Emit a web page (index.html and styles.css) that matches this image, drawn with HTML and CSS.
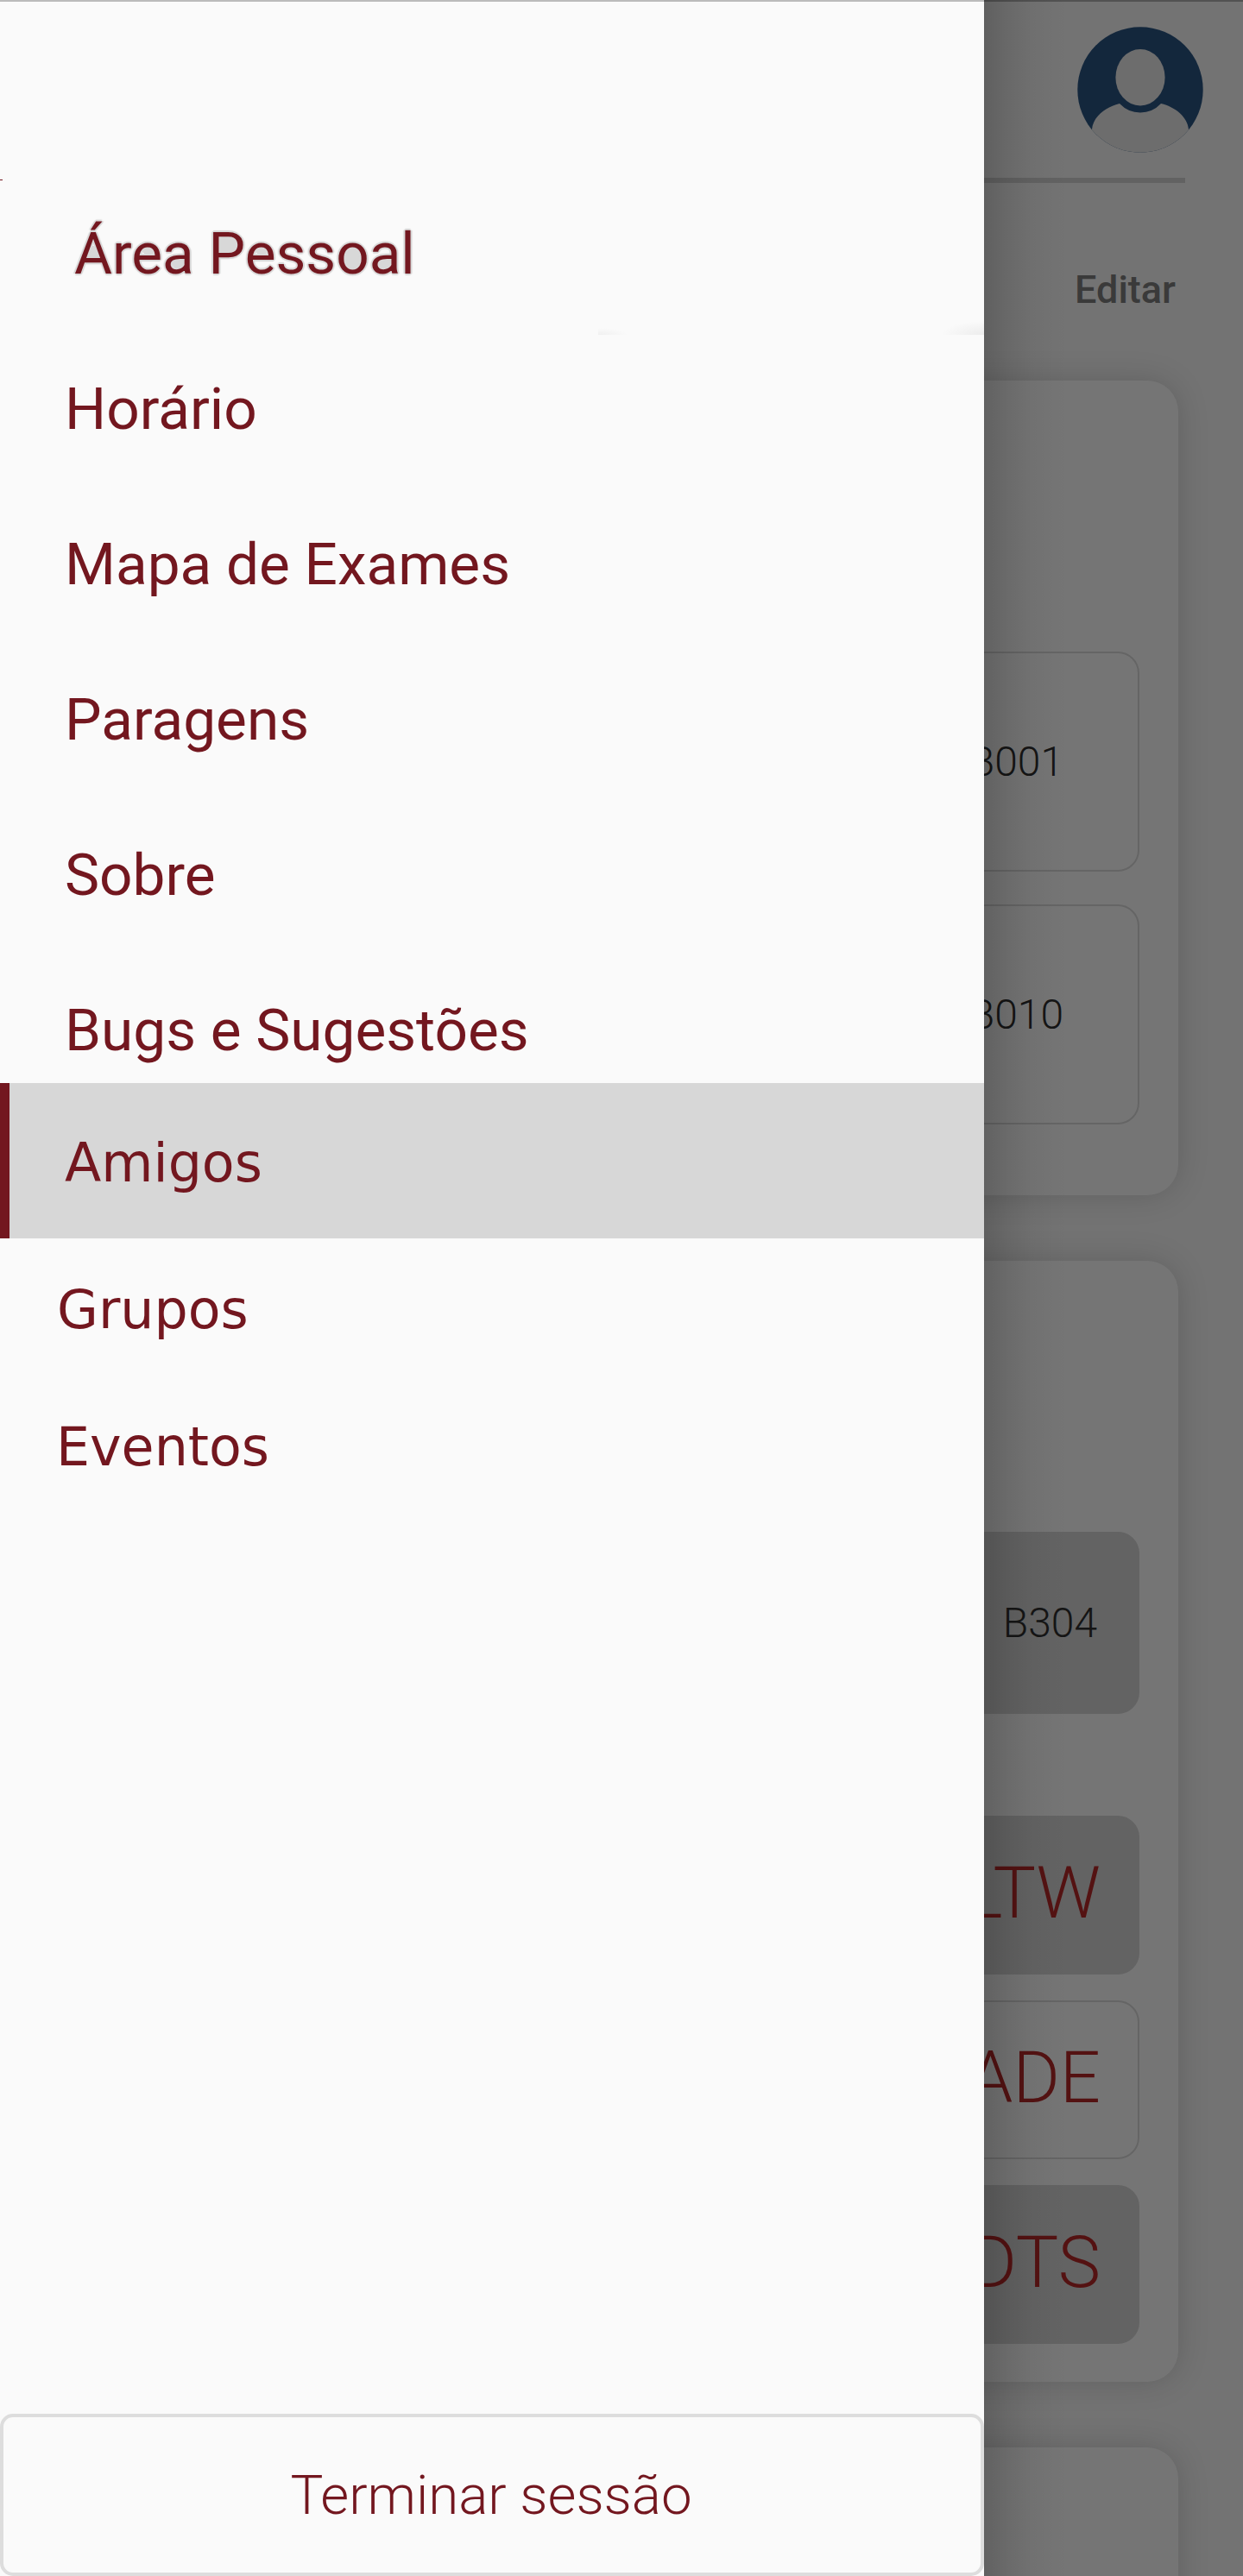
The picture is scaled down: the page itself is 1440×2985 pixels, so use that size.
FILE: index.html
```html
<!DOCTYPE html>
<html lang="pt">
<head>
<meta charset="utf-8">
<title>Área Pessoal</title>
<link rel="stylesheet" href="styles.css">
</head>
<body>
<div class="screen">
  <main class="page">
    <header class="topbar">
      <svg class="avatar" viewBox="0 0 146 146">
        <defs><clipPath id="disc"><circle cx="73" cy="73" r="72.7"/></clipPath></defs>
        <g clip-path="url(#disc)">
          <rect width="146" height="146" fill="#2a5583"/>
          <ellipse cx="73" cy="58.7" rx="28.6" ry="32.7" fill="#ededed"/>
          <path d="M17 119C18 105 32 93 49 89Q59 99.500 73 99.500T97 89C114 93 128 105 129 119V146H17Z" fill="#ededed"/>
        </g>
      </svg>
    </header>
    <div class="toolbar"><span class="edit">Editar</span></div>
    <section class="card card-exams">
      <div class="tile tall"><span>B001</span></div>
      <div class="tile tall"><span>B010</span></div>
    </section>
    <section class="card card-classes">
      <div class="tile filled room"><span>B304</span></div>
      <div class="tile filled course"><span>LTW</span></div>
      <div class="tile course"><span>ADE</span></div>
      <div class="tile filled course"><span>DTS</span></div>
    </section>
    <section class="card card-next"></section>
  </main>
  <div class="scrim"></div>
  <aside class="drawer">
    <nav class="menu">
      <a class="item first"><span class="halo">Área Pessoal</span></a>
      <a class="item">Horário</a>
      <a class="item">Mapa de Exames</a>
      <a class="item">Paragens</a>
      <a class="item">Sobre</a>
      <a class="item bugs">Bugs e Sugestões</a>
      <a class="item alt selected">Amigos</a>
      <a class="item alt groups">Grupos</a>
      <a class="item alt events">Eventos</a>
    </nav>
    <button class="logout">Terminar sessão</button>
  </aside>
</div>
</body>
</html>
```
FILE: styles.css
```css
* { box-sizing: border-box; }
body { margin: 0; font-family: Roboto, sans-serif; }
.screen { position: relative; width: 1440px; height: 2985px; overflow: hidden; background: #fafafa; }

.page { display: flex; flex-direction: column; height: 2985px; border-top: 2px solid #b4b4b4; }
.topbar { display: flex; flex: none; justify-content: flex-end; height: 210px; margin-right: 67px; padding-top: 29px; border-bottom: 6px solid #d5d5d5; }
.avatar { width: 146px; height: 146px; margin-right: -21px; flex: none; }
.toolbar { display: flex; flex: none; justify-content: flex-end; align-items: flex-start; height: 229px; padding: 94px 78px 0 0; }
.edit { font-size: 45px; font-weight: 500; line-height: 60px; color: #7e7e7e; }

.card { display: flex; flex-direction: column; flex: none; width: 1290px; margin-left: 75px; padding: 0 45px; border-radius: 36px; background: #fff; box-shadow: 0 0 36px rgba(0, 0, 0, .16); }
.card-exams { height: 944px; padding-top: 314px; gap: 38px; }
.card-classes { height: 1299px; margin-top: 76px; padding-top: 314px; gap: 30px; }
.card-next { height: 300px; margin-top: 76px; }
.tile { display: flex; flex: none; align-items: center; justify-content: flex-end; border: 2px solid #dcdcdc; border-radius: 25px; color: #2e2e2e; font-size: 48px; font-weight: 300; }
.tile.tall { height: 255px; padding-right: 86px; }
.tile.filled { background: #d7d7d7; border-color: #d7d7d7; }
.tile.room { height: 211px; padding-right: 47px; margin-bottom: 88px; }
.tile.course { height: 184px; padding: 0 43px 6px 0; color: #b72929; font-size: 83px; }

.scrim { position: absolute; inset: 0; background: linear-gradient(90deg, rgba(0,0,0,.17) 1140px, rgba(0,0,0,.09) 1168px, rgba(0,0,0,.035) 1195px, rgba(0,0,0,.01) 1220px, transparent 1240px), rgba(0, 0, 0, .54); }

.drawer { position: absolute; left: 0; top: 0; width: 1140px; height: 2985px; display: flex; flex-direction: column; justify-content: space-between; background: #fafafa; border-top: 2px solid #bbb; }

/* Grey fills inside the letters of the first entry, plus the soft edge at the right end of its row */
.menu {
  display: flex; flex-direction: column; padding-top: 202px;
  background:
    linear-gradient(#73171f, #73171f) 0 206px / 3px 1px no-repeat,
    radial-gradient(ellipse 7px 9px at 108px 292px, #d8d8d8 95%, transparent),
    radial-gradient(ellipse 9px 7px at 172px 286px, #d8d8d8 95%, transparent),
    radial-gradient(ellipse 9px 7px at 208px 303px, #d8d8d8 95%, transparent),
    linear-gradient(#d8d8d8, #d8d8d8) 253px 273px / 22px 20px no-repeat,
    radial-gradient(ellipse 9px 7px at 303px 286px, #d8d8d8 95%, transparent),
    radial-gradient(ellipse 11px 15px at 409px 298px, #d8d8d8 95%, transparent),
    radial-gradient(ellipse 9px 7px at 444px 303px, #d8d8d8 95%, transparent),
    radial-gradient(ellipse at 100% 100%, #ececec, #fafafa00 70%) 1090px 370px / 50px 16px no-repeat,
    radial-gradient(ellipse at 0 100%, #f0f0f0, #fafafa00 70%) 693px 378px / 35px 8px no-repeat;
}
.item { height: 180px; padding-left: 75px; font-size: 67.5px; line-height: 180px; color: #73171f; white-space: nowrap; }
.item.first { padding-left: 86px; }
.halo { text-shadow: 1px 1px 1px #d8d8d8, -1px -1px 1px #d8d8d8, 2px 0 1px #d8d8d8, -2px 0 1px #d8d8d8, 0 2px 1px #d8d8d8, 0 -2px 1px #d8d8d8; }
.item.bugs { height: 151px; }
.item.alt { font-family: "DejaVu Sans", sans-serif; font-size: 61.8px; }
.item.selected { padding-left: 64px; border-left: 11px solid #73171f; background: #d7d7d7; line-height: 187px; }
.item.groups { height: 165px; padding-left: 66px; line-height: 167px; }
.item.events { height: 153px; padding-left: 65px; line-height: 155px; }
.logout { height: 188px; padding: 1px 2px 0 0; border: 4px solid #ddd; border-radius: 15px; background: #fafafa; font-family: Roboto, sans-serif; font-size: 63.6px; font-weight: 300; color: #73171f; }
```
